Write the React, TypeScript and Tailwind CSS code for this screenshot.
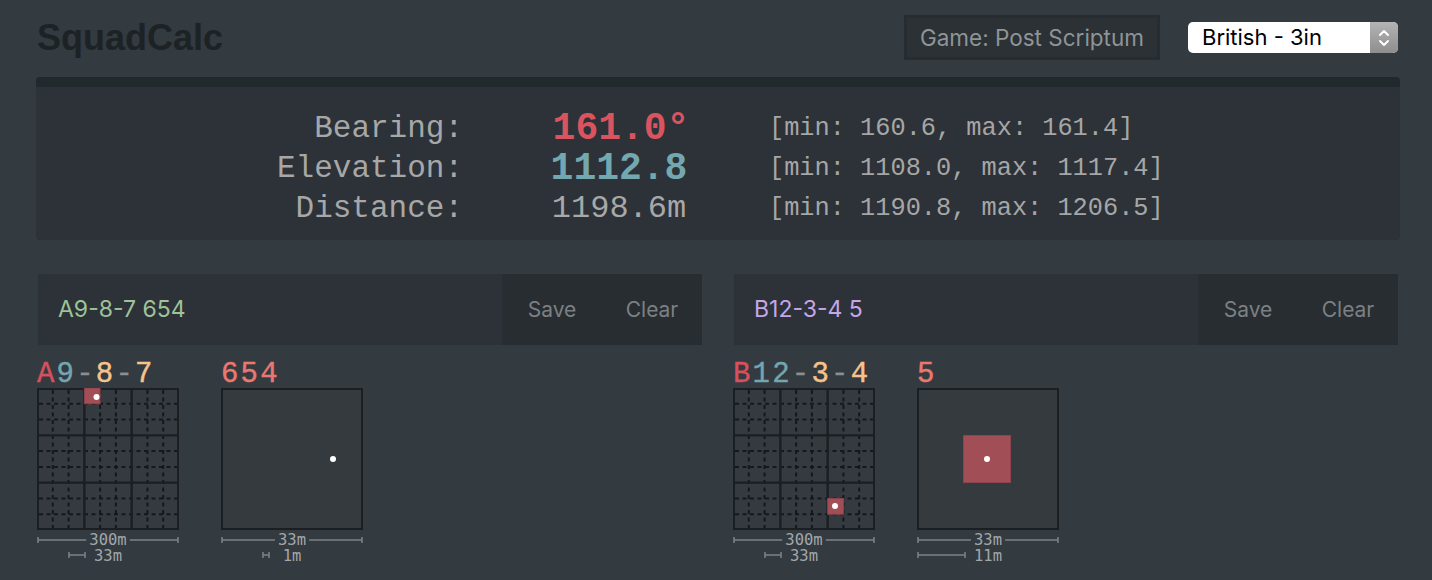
import React from "react";

const CELL = 142 / 9;

type Dot = { x: number; y: number };

function KeypadGrid({ mark, dot }: { mark: { col: number; row: number }; dot: Dot }) {
  const minor = [1, 2, 4, 5, 7, 8];
  const major = [3, 6];
  return (
    <svg width={142} height={142} className="block">
      <rect x={1} y={1} width={140} height={140} fill="#343a3f" stroke="#1b1f22" strokeWidth={2} />
      {minor.map((i) => (
        <g key={"m" + i}>
          <line x1={i * CELL} y1={2} x2={i * CELL} y2={140} stroke="#15181a" strokeWidth={2} strokeDasharray="4 3.5" />
          <line x1={2} y1={i * CELL} x2={140} y2={i * CELL} stroke="#15181a" strokeWidth={2} strokeDasharray="4 3.5" />
        </g>
      ))}
      {major.map((i) => (
        <g key={"M" + i}>
          <line x1={i * CELL} y1={1} x2={i * CELL} y2={141} stroke="#1b1f22" strokeWidth={2.4} />
          <line x1={1} y1={i * CELL} x2={141} y2={i * CELL} stroke="#1b1f22" strokeWidth={2.4} />
        </g>
      ))}
      <rect
        x={mark.col * CELL}
        y={mark.row * CELL}
        width={CELL}
        height={CELL}
        fill="#a24e57"
        stroke="#8c434b"
        strokeWidth={1}
      />
      <circle cx={dot.x} cy={dot.y} r={3} fill="#ffffff" />
    </svg>
  );
}

function SubBox({ square, dot }: { square?: boolean; dot: Dot }) {
  return (
    <svg width={142} height={142} className="block">
      <rect x={1} y={1} width={140} height={140} fill="#343a3e" stroke="#1b1f22" strokeWidth={2} />
      {square ? <rect x={46.5} y={47.5} width={47} height={47} fill="#a24e57" stroke="#8c434b" strokeWidth={1} /> : null}
      <circle cx={dot.x} cy={dot.y} r={3} fill="#ffffff" />
    </svg>
  );
}

function ScaleBars({ top, bottom, barWidth }: { top: string; bottom: string; barWidth: number }) {
  const textGap = top.length * 9.4 + 6;
  const left = 71 - textGap / 2;
  const right = 71 + textGap / 2;
  const stroke = "#7f8386";
  return (
    <svg width={142} height={34} className="block font-['DejaVu_Sans_Mono',monospace]">
      <line x1={1} y1={10} x2={left} y2={10} stroke={stroke} strokeWidth={1.5} />
      <line x1={right} y1={10} x2={141} y2={10} stroke={stroke} strokeWidth={1.5} />
      <line x1={1} y1={7} x2={1} y2={13} stroke={stroke} strokeWidth={1.5} />
      <line x1={141} y1={7} x2={141} y2={13} stroke={stroke} strokeWidth={1.5} />
      <text x={71} y={10} textAnchor="middle" dominantBaseline="central" fontSize={15.5} fill="#a3a7a9">
        {top}
      </text>
      <line x1={48 - barWidth} y1={25} x2={48} y2={25} stroke={stroke} strokeWidth={1.5} />
      <line x1={48 - barWidth} y1={22} x2={48 - barWidth} y2={28} stroke={stroke} strokeWidth={1.5} />
      <line x1={48} y1={22} x2={48} y2={28} stroke={stroke} strokeWidth={1.5} />
      <text x={71} y={25.5} textAnchor="middle" dominantBaseline="central" fontSize={15.5} fill="#a3a7a9">
        {bottom}
      </text>
    </svg>
  );
}

const RED = "text-[#d6505d]";
const TEAL = "text-[#74a6b0]";
const DASH = "text-[#8b8f92]";
const PEACH = "text-[#f6c38c]";
const SALMON = "text-[#eb7870]";

function KeypadLabel({ parts }: { parts: [string, string][] }) {
  return (
    <div className="font-['Liberation_Mono',monospace] text-[29px] leading-[26px] tracking-[2.2px] whitespace-nowrap [-webkit-text-stroke:0.4px_currentColor]">
      {parts.map(([text, cls], i) => (
        <span key={i} className={cls}>
          {text}
        </span>
      ))}
    </div>
  );
}

function CoordInput({ value, color }: { value: string; color: string }) {
  return (
    <div className="flex h-[71px] bg-[#2c3237]">
      <div className={`flex flex-1 items-center pl-[20px] text-[23px] ${color}`}>{value}</div>
      <div className="flex w-[200px] bg-[#282d31] text-[21px] text-[#7b8083]">
        <button type="button" className="flex w-[100px] items-center justify-center">
          Save
        </button>
        <button type="button" className="flex w-[100px] items-center justify-center">
          Clear
        </button>
      </div>
    </div>
  );
}

const results = [
  { label: "Bearing:", value: "161.0°", cls: "pl-[10px] text-[38px] font-bold text-[#da5460]", range: "[min: 160.6, max: 161.4]" },
  { label: "Elevation:", value: "1112.8", cls: "pl-[6px] text-[38px] font-bold text-[#74a8b0]", range: "[min: 1108.0, max: 1117.4]" },
  { label: "Distance:", value: "1198.6m", cls: "pl-[6px] text-[32px] text-[#a8a8a8]", range: "[min: 1190.8, max: 1206.5]" },
];

export default function App() {
  return (
    <div className="min-h-[580px] overflow-hidden bg-[#333a40] font-['Inter',sans-serif]">
      <header className="flex h-[77px] items-center pb-[2px] pl-[37px] pr-[34px]">
        <h1 className="font-['Liberation_Sans',Arial,sans-serif] text-[36px] font-bold leading-none text-[#1d2225]">
          SquadCalc
        </h1>
        <div className="ml-auto flex h-[45px] items-center border-[3px] border-[#262c30] bg-[#2b3135] px-[13px] text-[22.5px] text-[#8f9496]">
          Game: Post Scriptum
        </div>
        <div className="ml-[28px] flex h-[31px] w-[210px] overflow-hidden rounded-[5px] bg-white">
          <div className="flex flex-1 items-center pl-[14px] text-[22px] text-black">British - 3in</div>
          <div className="flex w-[28px] items-center justify-center bg-gradient-to-b from-[#b4b4b4] to-[#8e8e8e]">
            <svg width={14} height={22} viewBox="0 0 14 22" fill="none" stroke="#ffffff" strokeWidth={2} strokeLinecap="round" strokeLinejoin="round">
              <path d="M3 8 L7 4 L11 8" />
              <path d="M3 14 L7 18 L11 14" />
            </svg>
          </div>
        </div>
      </header>

      <section className="ml-[36px] mr-[32px] overflow-hidden rounded-[4px] bg-[#2c3237]">
        <div className="h-[10px] bg-[#22292c]" />
        <div className="grid grid-cols-[427px_306px_1fr] pb-[11px] pt-[22px] font-['Liberation_Mono',monospace] leading-[40px]">
          {results.map((row) => (
            <React.Fragment key={row.label}>
              <div className="text-right text-[31px] text-[#a7a7a7]">{row.label}</div>
              <div className={`text-center ${row.cls}`}>{row.value}</div>
              <div className="text-[25.3px] text-[#a6a6a6]">{row.range}</div>
            </React.Fragment>
          ))}
        </div>
      </section>

      <div className="mt-[34px] grid grid-cols-2 gap-[32px] pl-[38px] pr-[34px]">
        <div>
          <CoordInput value="A9-8-7 654" color="text-[#9ec39a]" />
          <div className="-ml-px mt-[17px] flex gap-[42px]">
            <div>
              <KeypadLabel
                parts={[
                  ["A", RED],
                  ["9", TEAL],
                  ["-", DASH],
                  ["8", PEACH],
                  ["-", DASH],
                  ["7", PEACH],
                ]}
              />
              <KeypadGrid mark={{ col: 3, row: 0 }} dot={{ x: 59.5, y: 9 }} />
              <ScaleBars top="300m" bottom="33m" barWidth={16} />
            </div>
            <div>
              <KeypadLabel parts={[["654", SALMON]]} />
              <SubBox dot={{ x: 112, y: 71 }} />
              <ScaleBars top="33m" bottom="1m" barWidth={6} />
            </div>
          </div>
        </div>
        <div>
          <CoordInput value="B12-3-4 5" color="text-[#c6a6e8]" />
          <div className="-ml-px mt-[17px] flex gap-[42px]">
            <div>
              <KeypadLabel
                parts={[
                  ["B", RED],
                  ["12", TEAL],
                  ["-", DASH],
                  ["3", PEACH],
                  ["-", DASH],
                  ["4", PEACH],
                ]}
              />
              <KeypadGrid mark={{ col: 6, row: 7 }} dot={{ x: 102, y: 118 }} />
              <ScaleBars top="300m" bottom="33m" barWidth={16} />
            </div>
            <div>
              <KeypadLabel parts={[["5", SALMON]]} />
              <SubBox square dot={{ x: 70, y: 71 }} />
              <ScaleBars top="33m" bottom="11m" barWidth={47} />
            </div>
          </div>
        </div>
      </div>
    </div>
  );
}
